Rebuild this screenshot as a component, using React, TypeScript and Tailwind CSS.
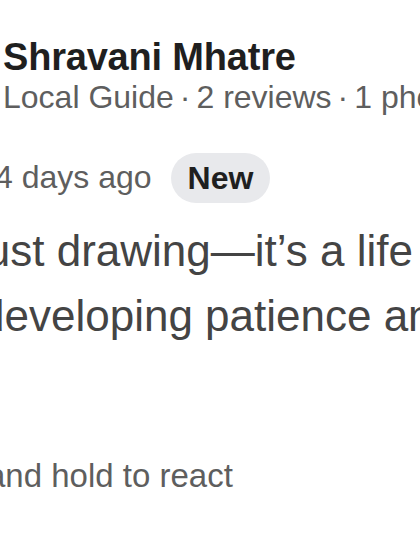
const font = { fontFamily: '"Liberation Sans", Arial, Helvetica, sans-serif' }

function Dot() {
  return <span className="mx-[6px]">·</span>
}

export default function App() {
  return (
    <div className="h-[560px] w-[420px] overflow-hidden bg-white" style={font}>
      {/* reviewer header */}
      <div className="pt-[36px] pl-[3px] whitespace-nowrap">
        <div className="text-[38px] font-bold leading-[43px] tracking-[-0.2px] text-[#1f1f1f]">Shravani Mhatre</div>
        <div className="text-[32px] leading-[36px] text-[#5e5e5e]">
          Local Guide<Dot />2 reviews<Dot />1 photo
        </div>
      </div>

      {/* rating row */}
      <div className="mt-[38px] ml-[-5px] flex items-center gap-[19px] whitespace-nowrap">
        <span className="-mt-[3px] text-[32px] leading-[40px] text-[#5e5e5e]">4 days ago</span>
        <span className="flex h-[50px] items-center rounded-full bg-[#e8e9ec] px-[17px] text-[32px] font-bold text-[#1f1f1f]">
          New
        </span>
      </div>

      {/* review body */}
      <div className="mt-[15px] whitespace-nowrap text-[44px] leading-[65px] text-[#444]">
        <div className="ml-[-24px]">just drawing—it’s a life</div>
        <div className="ml-[-20px]">developing patience and</div>
      </div>

      {/* reaction hint */}
      <div className="mt-[108px] ml-[-13px] whitespace-nowrap text-[33px] leading-[40px] text-[#5e5e5e]">
        and hold to react
      </div>
    </div>
  )
}
